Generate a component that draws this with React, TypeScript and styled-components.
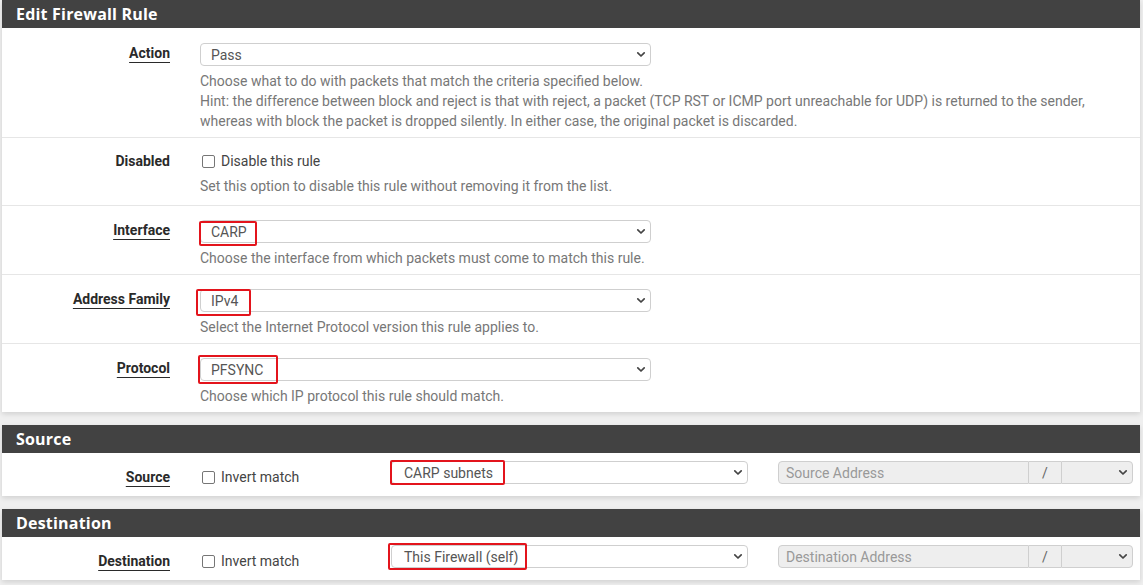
import React from 'react';
import styled, { createGlobalStyle } from 'styled-components';

const GlobalStyle = createGlobalStyle`
  html, body { margin: 0; padding: 0; background: #efefef; }
  body {
    font-family: Roboto, "Liberation Sans", Arial, sans-serif;
    font-size: 14px;
    color: #333;
  }
  * { box-sizing: border-box; }
`;

const Page = styled.div`
  display: flex;
  flex-direction: column;
  gap: 13px;
  padding: 0 3px 5px 2px;
`;

const Panel = styled.section`
  background: #fff;
  box-shadow: 0 2px 5px rgba(0, 0, 0, 0.13);
`;

const PanelHeader = styled.h2`
  margin: 0;
  height: 28px;
  display: flex;
  align-items: center;
  padding: 0 14px;
  background: #424242;
  color: #fff;
  font-family: "Open Sans", "Liberation Sans", sans-serif;
  font-size: 16px;
  font-weight: 700;
  letter-spacing: 0.2px;
`;

const Row = styled.div<{ $wide?: boolean; $pt?: number; $pb?: number }>`
  display: grid;
  grid-template-columns: ${(p) => (p.$wide ? '168px 161px 357px 355px' : '168px 1fr')};
  column-gap: 30px;
  align-items: start;
  padding-top: ${(p) => p.$pt ?? (p.$wide ? 8 : 14)}px;
  padding-bottom: ${(p) => p.$pb ?? (p.$wide ? 9 : 6)}px;
  & + & { border-top: 1px solid #e6e6e6; }
`;

const Label = styled.div<{ $pt?: number }>`
  text-align: right;
  font-weight: 700;
  line-height: 20px;
  color: #2a2a2a;
  padding-top: ${(p) => p.$pt ?? 0}px;
`;

const LabelText = styled.span<{ $link?: boolean }>`
  text-decoration: ${(p) => (p.$link ? 'underline' : 'none')};
  text-decoration-thickness: 1px;
  text-underline-offset: 4px;
`;

const Control = styled.div`
  display: flex;
  flex-direction: column;
  align-items: flex-start;
  min-width: 0;
`;

const SelectBox = styled.div<{ $disabled?: boolean; $pad?: number; $width?: number }>`
  position: relative;
  width: ${(p) => (p.$width ? `${p.$width}px` : '100%')};
  height: 23px;
  display: flex;
  align-items: center;
  justify-content: space-between;
  padding: 0 4px 0 ${(p) => p.$pad ?? 10}px;
  border: 1px solid #cfcfcf;
  border-radius: 4px;
  background: ${(p) => (p.$disabled ? '#eeeeee' : '#fff')};
  color: #555;
  font-size: 14px;
  line-height: 20px;
  white-space: nowrap;
`;

const Annot = styled.span<{ $l: number; $t: number; $w: number; $h: number }>`
  position: absolute;
  left: ${(p) => p.$l}px;
  top: ${(p) => p.$t}px;
  width: ${(p) => p.$w}px;
  height: ${(p) => p.$h}px;
  border: 2px solid #e3141c;
  border-radius: 2px;
  pointer-events: none;
`;

const Help = styled.div<{ $mt?: number }>`
  margin-top: ${(p) => p.$mt ?? 5}px;
  color: #777;
  line-height: 20px;
`;

const CheckLine = styled.label<{ $pt?: number }>`
  display: flex;
  align-items: center;
  gap: 6px;
  height: 20px;
  margin-top: ${(p) => p.$pt ?? 0}px;
  padding-left: 2px;
  color: #444;
`;

const Box = styled.span`
  width: 13px;
  height: 13px;
  border: 1px solid #767676;
  border-radius: 2px;
  background: #fff;
  flex: none;
`;

const AddrGroup = styled.div`
  display: flex;
  height: 23px;
`;

const AddrInput = styled.div`
  flex: 1;
  display: flex;
  align-items: center;
  padding-left: 7px;
  border: 1px solid #cfcfcf;
  border-radius: 4px 0 0 4px;
  background: #eee;
  color: #999;
`;

const AddrSlash = styled.div`
  width: 32px;
  display: flex;
  align-items: center;
  justify-content: center;
  border-top: 1px solid #cfcfcf;
  border-bottom: 1px solid #cfcfcf;
  background: #eee;
  color: #666;
`;

const AddrMask = styled.div`
  width: 72px;
  display: flex;
  align-items: center;
  justify-content: flex-end;
  padding-right: 4px;
  border: 1px solid #cfcfcf;
  border-radius: 0 4px 4px 0;
  background: #eee;
`;

const Chevron = () => (
  <svg width="10" height="7" viewBox="0 0 10 7" aria-hidden="true">
    <path d="M1.8 1.8 L5 5 L8.2 1.8" fill="none" stroke="#444" strokeWidth="1.7" strokeLinecap="round" strokeLinejoin="round" />
  </svg>
);

type AnnotBox = { l: number; t: number; w: number; h: number };

const Select = ({ value, annot, pad, width }: { value: string; annot?: AnnotBox; pad?: number; width?: number }) => (
  <SelectBox $pad={pad} $width={width}>
    <span>{value}</span>
    <Chevron />
    {annot && <Annot $l={annot.l} $t={annot.t} $w={annot.w} $h={annot.h} />}
  </SelectBox>
);

const Address = ({ placeholder }: { placeholder: string }) => (
  <AddrGroup>
    <AddrInput>{placeholder}</AddrInput>
    <AddrSlash>/</AddrSlash>
    <AddrMask>
      <Chevron />
    </AddrMask>
  </AddrGroup>
);

export default function App() {
  return (
    <>
      <GlobalStyle />
      <Page>
        <Panel>
          <PanelHeader>Edit Firewall Rule</PanelHeader>
          <Row $pt={15}>
            <Label><LabelText $link>Action</LabelText></Label>
            <Control>
              <Select value="Pass" width={451} />
              <Help>
                Choose what to do with packets that match the criteria specified below.
                <br />
                Hint: the difference between block and reject is that with reject, a packet (TCP RST or ICMP port unreachable for UDP) is returned to the sender,
                <br />
                whereas with block the packet is dropped silently. In either case, the original packet is discarded.
              </Help>
            </Control>
          </Row>
          <Row $pt={13} $pb={9}>
            <Label><LabelText>Disabled</LabelText></Label>
            <Control>
              <CheckLine>
                <Box />
                Disable this rule
              </CheckLine>
              <Help $mt={5}>Set this option to disable this rule without removing it from the list.</Help>
            </Control>
          </Row>
          <Row>
            <Label><LabelText $link>Interface</LabelText></Label>
            <Control>
              <Select value="CARP" width={451} annot={{ l: -2, t: 0, w: 58, h: 25 }} />
              <Help>Choose the interface from which packets must come to match this rule.</Help>
            </Control>
          </Row>
          <Row>
            <Label><LabelText $link>Address Family</LabelText></Label>
            <Control>
              <Select value="IPv4" width={451} annot={{ l: -5, t: -1, w: 55, h: 27 }} />
              <Help>Select the Internet Protocol version this rule applies to.</Help>
            </Control>
          </Row>
          <Row>
            <Label><LabelText $link>Protocol</LabelText></Label>
            <Control>
              <Select value="PFSYNC" width={451} annot={{ l: -3, t: -4, w: 80, h: 29 }} />
              <Help>Choose which IP protocol this rule should match.</Help>
            </Control>
          </Row>
        </Panel>

        <Panel>
          <PanelHeader>Source</PanelHeader>
          <Row $wide>
            <Label $pt={6}><LabelText $link>Source</LabelText></Label>
            <CheckLine $pt={6}>
              <Box />
              Invert match
            </CheckLine>
            <Select value="CARP subnets" pad={12} annot={{ l: -2, t: -2, w: 115, h: 25 }} />
            <Address placeholder="Source Address" />
          </Row>
        </Panel>

        <Panel>
          <PanelHeader>Destination</PanelHeader>
          <Row $wide>
            <Label $pt={6}><LabelText $link>Destination</LabelText></Label>
            <CheckLine $pt={6}>
              <Box />
              Invert match
            </CheckLine>
            <Select value="This Firewall (self)" pad={12} annot={{ l: -4, t: -3, w: 139, h: 27 }} />
            <Address placeholder="Destination Address" />
          </Row>
        </Panel>
      </Page>
    </>
  );
}
